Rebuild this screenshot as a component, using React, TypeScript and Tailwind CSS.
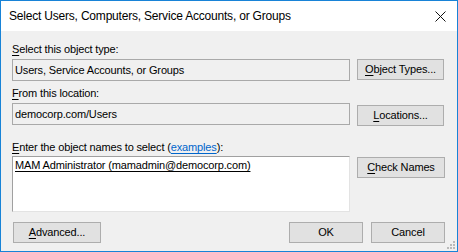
import { ReactNode } from "react";

function Mn({ children }: { children: ReactNode }) {
  return <span className="underline underline-offset-[2px]">{children}</span>;
}

function Btn({ children, w, extra = "" }: { children: ReactNode; w: string; extra?: string }) {
  return (
    <button
      className={`${w} ${extra} h-[21px] shrink-0 bg-[#e1e1e1] border border-[#adadad] text-black text-[11px] leading-[19px] tracking-[-0.15px] text-center`}
    >
      {children}
    </button>
  );
}

function Label({ children, extra = "" }: { children: ReactNode; extra?: string }) {
  return <div className={`h-[14px] leading-[14px] text-[11px] tracking-[-0.15px] text-black ${extra}`}>{children}</div>;
}

function ReadField({ value }: { value: string }) {
  return (
    <div className="w-[338px] h-[22px] shrink-0 border border-[#a9a9a9] bg-[#f0f0f0] px-[2px] text-[11px] leading-[20px] tracking-[-0.15px] text-black whitespace-nowrap overflow-hidden">
      {value}
    </div>
  );
}

export default function App() {
  return (
    <div
      className="relative w-[458px] h-[252px] border border-[#1883d7] bg-[#f0f0f0] flex flex-col overflow-hidden select-none"
      style={{ fontFamily: '"Liberation Sans", Arial, sans-serif' }}
    >
      {/* title bar */}
      <div className="h-[30px] shrink-0 bg-white flex items-center justify-between pl-[8px] pr-[10px]">
        <span className="text-[12px] tracking-[-0.2px] text-black">
          Select Users, Computers, Service Accounts, or Groups
        </span>
        <svg width="11" height="11" viewBox="0 0 11 11" className="mr-[1px]">
          <path d="M0.5 0.5 L10.5 10.5 M10.5 0.5 L0.5 10.5" stroke="#111" strokeWidth="1" />
        </svg>
      </div>

      {/* body */}
      <div className="flex-1 flex flex-col pl-[11px] pr-[12px] pt-[11px]">
        <Label extra="mb-[3px]">
          <Mn>S</Mn>elect this object type:
        </Label>
        <div className="flex gap-[7px]">
          <ReadField value="Users, Service Accounts, or Groups" />
          <Btn w="w-[87px]">
            <Mn>O</Mn>bject Types...
          </Btn>
        </div>

        <Label extra="mt-[5px] mb-[3px]">
          <Mn>F</Mn>rom this location:
        </Label>
        <div className="flex gap-[7px]">
          <ReadField value="democorp.com/Users" />
          <Btn w="w-[87px]" extra="mt-[2px]">
            <Mn>L</Mn>ocations...
          </Btn>
        </div>

        <Label extra="mt-[14px] mb-[2px]">
          <Mn>E</Mn>nter the object names to select (
          <span className="text-[#0066cc] underline underline-offset-[2px]">examples</span>):
        </Label>
        <div className="flex gap-[7px]">
          <div className="w-[338px] h-[56px] shrink-0 border border-t-[#a0a0a0] border-l-[#a0a0a0] border-r-[#e3e3e3] border-b-[#e3e3e3] bg-white px-[2px] pt-[1px] text-[11px] leading-[14px] tracking-[-0.15px] text-black">
            <span className="underline underline-offset-[2px]">MAM Administrator (mamadmin@democorp.com)</span>
          </div>
          <Btn w="w-[88px]" extra="mt-[1px]">
            <Mn>C</Mn>heck Names
          </Btn>
        </div>

        <div className="flex mt-[10px] gap-[8px]">
          <Btn w="w-[88px]" extra="ml-[1px]">
            <Mn>A</Mn>dvanced...
          </Btn>
          <div className="flex-1" />
          <Btn w="w-[74px]">OK</Btn>
          <Btn w="w-[74px]">Cancel</Btn>
        </div>
      </div>

      {/* size grip */}
      <svg width="10" height="10" viewBox="0 0 10 10" className="absolute right-[1px] bottom-[1px]">
        <g fill="#b9b9b9">
          <rect x="7" y="1" width="2" height="2" />
          <rect x="4" y="4" width="2" height="2" />
          <rect x="7" y="4" width="2" height="2" />
          <rect x="1" y="7" width="2" height="2" />
          <rect x="4" y="7" width="2" height="2" />
          <rect x="7" y="7" width="2" height="2" />
        </g>
      </svg>
    </div>
  );
}
